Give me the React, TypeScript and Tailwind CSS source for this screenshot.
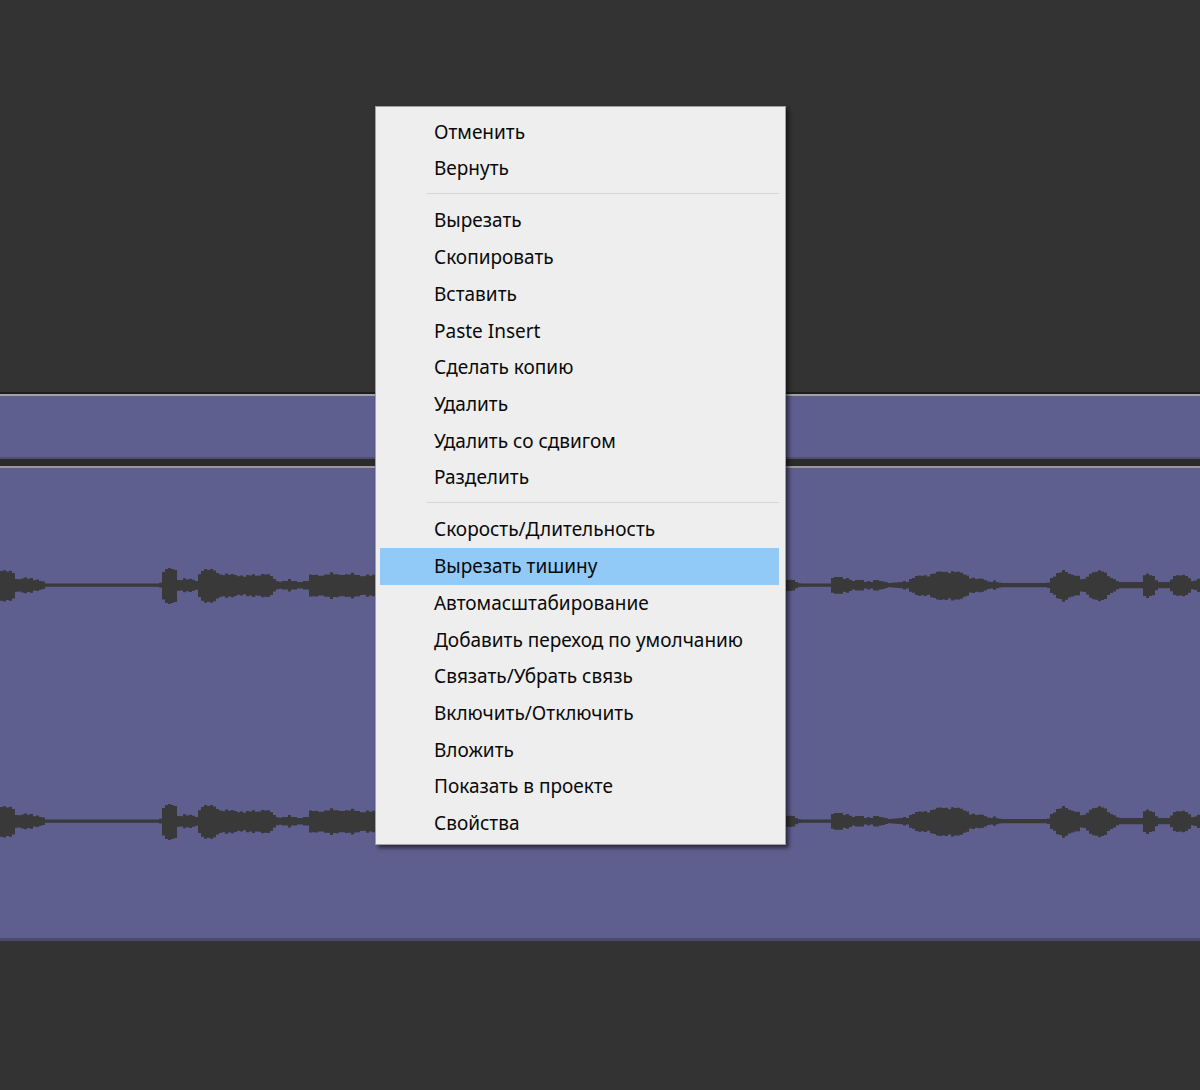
import React from 'react'

type Item = { label: string } | { sep: true }

const menu: Item[] = [
  { label: 'Отменить' },
  { label: 'Вернуть' },
  { sep: true },
  { label: 'Вырезать' },
  { label: 'Скопировать' },
  { label: 'Вставить' },
  { label: 'Paste Insert' },
  { label: 'Сделать копию' },
  { label: 'Удалить' },
  { label: 'Удалить со сдвигом' },
  { label: 'Разделить' },
  { sep: true },
  { label: 'Скорость/Длительность' },
  { label: 'Вырезать тишину' },
  { label: 'Автомасштабирование' },
  { label: 'Добавить переход по умолчанию' },
  { label: 'Связать/Убрать связь' },
  { label: 'Включить/Отключить' },
  { label: 'Вложить' },
  { label: 'Показать в проекте' },
  { label: 'Свойства' },
]

// envelope keypoints: [x, amplitude]
const env: [number, number][] = [
  [0, 14], [12, 13], [15, 7], [30, 6], [40, 5], [45, 1.5], [157, 1.5], [160, 4], [163, 16], [175, 16],
  [177, 6], [196, 5], [199, 15], [212, 15], [220, 11], [245, 9], [262, 11], [270, 9], [273, 5], [282, 4],
  [306, 4], [310, 10], [340, 11], [375, 9], [500, 8], [700, 6], [787, 6], [799, 1.5], [828, 1.5], [831, 7],
  [848, 7], [852, 4], [880, 4], [888, 2], [900, 3], [915, 8], [935, 12], [950, 14], [965, 10], [975, 6],
  [990, 4], [1000, 2], [1046, 2], [1050, 8], [1062, 14], [1075, 10], [1082, 4], [1088, 12], [1100, 14],
  [1110, 8], [1117, 3], [1140, 3], [1144, 12], [1152, 10], [1156, 3], [1168, 3], [1172, 10], [1185, 9],
  [1192, 4], [1200, 6],
]

function ampAt(x: number) {
  for (let i = 1; i < env.length; i++) {
    const [x1, a1] = env[i]
    const [x0, a0] = env[i - 1]
    if (x <= x1) return a0 + ((a1 - a0) * (x - x0)) / (x1 - x0 || 1)
  }
  return 2
}

function wavePath(cy: number) {
  const step = 3
  const top: string[] = []
  const bot: string[] = []
  for (let x = 0; x <= 1200; x += step) {
    const a = ampAt(x)
    const n = a > 3 ? Math.round(Math.sin(x * 0.31) * 1 + Math.sin(x * 0.9) * 0.6) : 0
    const up = Math.max(1.5, a + n)
    const dn = Math.max(1.5, a * 1.12 + n)
    top.push(`L${x} ${cy - up} L${x + step} ${cy - up}`)
    bot.unshift(`L${x + step} ${cy + dn} L${x} ${cy + dn}`)
  }
  return `M0 ${cy} ${top.join(' ')} ${bot.join(' ')} Z`
}

export default function App() {
  return (
    <div className="relative w-full h-[1090px] bg-[#333333] overflow-hidden" style={{ fontFamily: '"Noto Sans", sans-serif' }}>
      <div className="h-[392px]" />
      <div className="h-[2px] bg-[#1e1e1e]" />
      <div className="h-[2px] bg-[#a3a3a3]" />
      <div className="h-[61px] bg-[#5f5f8f]" />
      <div className="h-[2px] bg-[#4e4e74]" />
      <div className="h-[7px] bg-[#2b2b2b]" />
      <div className="h-[2px] bg-[#9a9a9a]" />
      <div className="h-[470px] bg-[#5f5f8f]">
        <svg width="1200" height="470" viewBox="0 0 1200 470" className="block">
          <path d={wavePath(117)} fill="#393939" />
          <path d={wavePath(353)} fill="#393939" />
        </svg>
      </div>
      <div className="h-[3px] bg-[#4a4a6c]" />

      <div className="absolute left-[375px] top-[106px] w-[411px] bg-[#eeeeee] border border-[#a0a0a0] shadow-[3px_3px_4px_rgba(0,0,0,0.55)] pt-[6.5px] pb-[2px]">
        {menu.map((it, i) =>
          'sep' in it ? (
            <div key={i} className="h-[15.5px] pt-[6px] ml-[51px] mr-[6px]">
              <div className="h-px bg-[#d5d5d5]" />
            </div>
          ) : (
            <div
              key={i}
              className={`h-[36.7px] ml-[4px] mr-[6px] pl-[54px] flex items-center text-[19px] text-[#0a0a0a] ${
                it.label === 'Вырезать тишину' ? 'bg-[#91c9f7]' : ''
              }`}
            >
              {it.label}
            </div>
          )
        )}
      </div>
    </div>
  )
}
